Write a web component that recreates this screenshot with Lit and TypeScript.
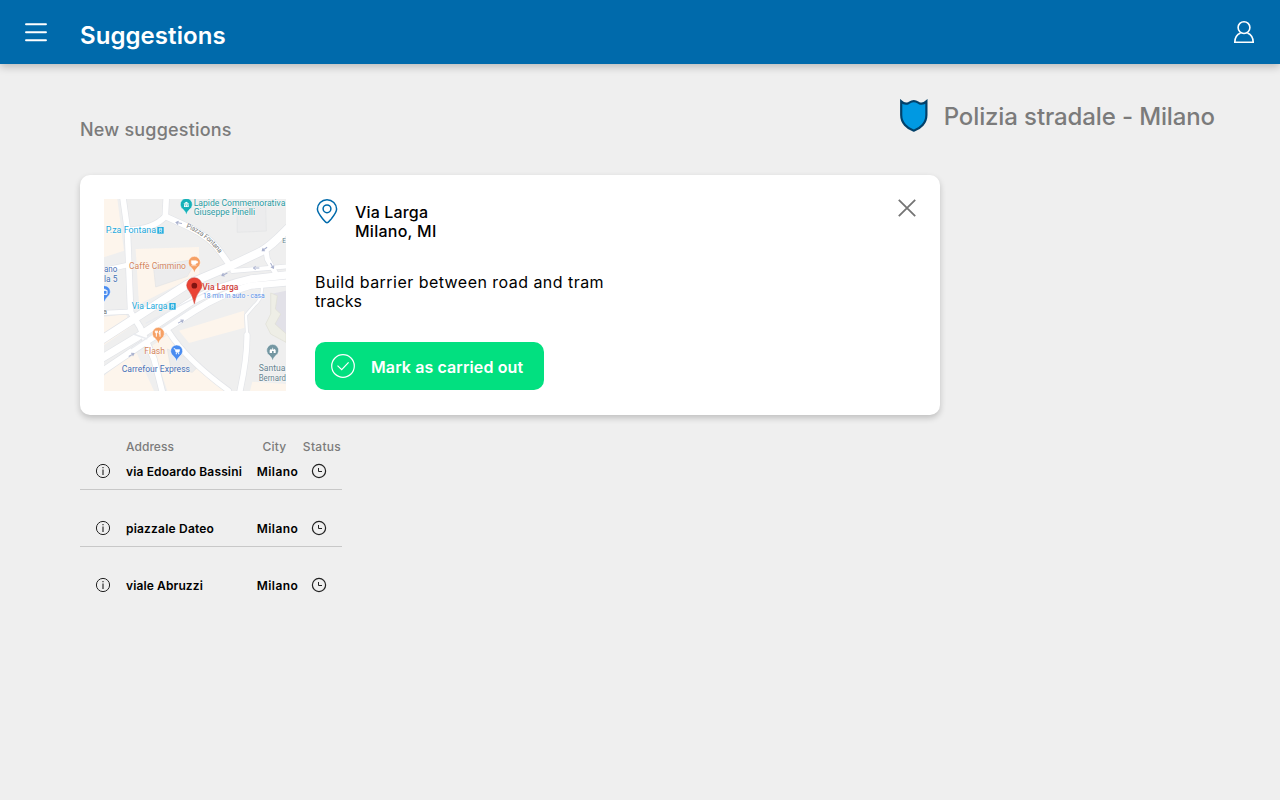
import { LitElement, html, css, svg } from "lit";
import { customElement, property } from "lit/decorators.js";

@customElement("street-map")
class StreetMap extends LitElement {
  static styles = css`
    :host { display: block; width: 182px; height: 192px; }
    svg { display: block; width: 100%; height: 100%; font-family: Roboto, sans-serif; }
    .block { fill: #fdf5ec; }
    .lot { fill: #ececed; stroke: #e3e4e6; stroke-width: 2; }
    .edge { fill: none; stroke: #e2e4e8; stroke-linecap: round; stroke-linejoin: round; }
    .road { fill: none; stroke: #fff; stroke-linecap: round; stroke-linejoin: round; }
    .arrow { fill: none; stroke: #a9b1ce; stroke-width: 3; }
    text { paint-order: stroke; stroke: #fff; stroke-width: 3px; stroke-opacity: 0.6; }
    .teal { fill: #2a9ba3; }
    .cyan { fill: #25a9dc; }
    .orange { fill: #d4855c; }
    .blue { fill: #466fb4; }
    .slate { fill: #66838f; }
    .red { fill: #cf3c38; font-weight: 500; }
    .eta { fill: #5b91e8; }
    .grey { fill: #777; }
  `;

  private roads: [string, number][] = [
    ["M56 -10L70 90L80 340L108 384L150 480L178 590", 17],
    ["M-10 216L75 197", 14],
    ["M-10 342L80 338", 13],
    ["M187 -10L184 52Q150 90 70 94", 17],
    ["M184 52L250 82Q320 115 350 160L382 205", 17],
    ["M556 84C520 120 500 142 470 158L382 200L250 256L-10 424", 24],
    ["M385 216L556 202", 12],
    ["M486 155L490 180L518 228", 15],
    ["M556 227L440 240Q350 260 270 302L100 414L-10 480", 22],
    ["M556 250L440 260Q350 285 270 336L120 432L-10 520", 19],
    ["M474 265Q475 300 450 320L426 348L429 405", 7],
    ["M429 408Q430 480 405 590", 16],
    ["M195 400Q250 485 374 575", 15],
  ];

  private labels: [string, string, number, number, number, number][] = [
    ["teal", "Lapide Commemorativa", 269, 20, 275, 26],
    ["teal", "Giuseppe Pinelli", 269, 49, 184, 26],
    ["cyan", "P.za Fontana", 5, 102, 151, 26],
    ["orange", "Caffè Cimmino", 75, 209, 171, 26],
    ["blue", "ano", 0, 220, 40, 26],
    ["blue", "la 5", 0, 250, 40, 26],
    ["cyan", "Via Larga", 83, 329, 107, 26],
    ["orange", "Flash", 121, 466, 62, 26],
    ["blue", "Carrefour Express", 53, 518, 205, 26],
    ["slate", "Santua", 464, 515, 80, 26],
    ["slate", "Bernard", 464, 545, 82, 26],
    ["red", "Via Larga", 295, 274, 108, 26],
    ["eta", "18 min in auto - casa", 297, 298, 185, 20],
  ];

  render() {
    return html`<svg viewBox="0 0 546 576">
      <rect width="546" height="576" fill="#efefef"></rect>
      <path class="block" d="M0 0H40L60 155L0 175ZM95 150L285 144L286 225L105 316ZM0 354L65 345L85 380L0 438ZM225 395L420 335L422 386L255 432ZM0 530L95 455L150 576H0ZM145 440L195 405L370 576H190ZM445 548L546 555V576H438Z"></path>
      <path class="lot" d="M400 32L485 15L487 96L400 100ZM148 200L280 180L250 232L155 264ZM190 450L290 495L265 520L200 505Z"></path>
      <path fill="#e2e1e8" d="M500 285L546 275V425L505 395Z"></path>
      <path fill="#eeeee6" stroke="#e0dfd5" stroke-width="2" d="M500 282L520 290L514 330L530 345L513 375L546 404V430L500 405L485 375L500 345Z"></path>
      ${this.roads.map(([d, w]) => svg`<path class="edge" d=${d} stroke-width=${w + 4}></path>`)}
      ${this.roads.map(([d, w]) => svg`<path class="road" d=${d} stroke-width=${w}></path>`)}
      <path fill="none" stroke="#e9ebef" stroke-width="4" d="M125 373L330 267M80 450L260 328M130 420L88 405"></path>
      ${[[225, 72, 190], [362, 226, 155], [482, 150, 145], [457, 207, 180], [504, 200, 60], [230, 368, -30], [82, 468, -30]].map(
        ([x, y, a]) => svg`<path class="arrow" transform="translate(${x} ${y}) rotate(${a})" d="M-9 0H8M2 -5L9 0L2 5"></path>`
      )}

      <path id="fontana" fill="none" d="M246 86Q305 108 350 168"></path>
      <text class="grey" font-size="20"><textPath href="#fontana" textLength="128">Piazza Fontana</textPath></text>
      ${this.labels.map(
        ([tone, label, x, y, length, size]) =>
          svg`<text class=${tone} x=${x} y=${y} font-size=${size} textLength=${length} lengthAdjust="spacingAndGlyphs">${label}</text>`
      )}
      <text class="grey" font-size="22" x="-3" y="346">a</text>
      <text class="slate" font-size="24" x="535" y="132" textLength="11" lengthAdjust="spacingAndGlyphs">E</text>

      ${[[160, 84], [196, 312]].map(
        ([x, y]) => svg`<g transform="translate(${x} ${y})"><rect width="19" height="20" fill="#20acdf"></rect><path d="M6 4H13V13H6ZM6 8H13M6 17L8 14M13 17L11 14" fill="none" stroke="#fff" stroke-width="2"></path></g>`
      )}
      ${this.pin(247, 17, "#16b1b8", svg`<path d="M-9 -3L0 -9L9 -3ZM-7 -1H7V7H-7Z" fill="#fff"></path><path d="M-3 0V5M3 0V5" stroke="#16b1b8" stroke-width="2"></path>`)}
      ${this.pin(271, 191, "#f6a064", svg`<path d="M-9 -6H6V1Q6 6 0 6H-3Q-9 6 -9 0ZM6 -4H10V1H6M-9 9H7" fill="#fff" stroke="#fff" stroke-width="1.5"></path>`)}
      ${this.pin(163, 404, "#f6a064", svg`<path d="M-6 -9V9M-9 -9V-3H-3V-9M5 9V-9Q1 -5 3 1H5" fill="none" stroke="#fff" stroke-width="3"></path>`)}
      ${this.pin(218, 457, "#4a8cf0", svg`<path d="M-9 -8H-5L-2 3H7L9 -5H-4" fill="#fff" stroke="#fff" stroke-width="2"></path><circle cx="-1" cy="7" r="2" fill="#fff"></circle><circle cx="6" cy="7" r="2" fill="#fff"></circle>`)}
      ${this.pin(1, 279, "#4a8cf0", svg`<path d="M-8 -5H8V7H-8ZM-4 -8H4" fill="none" stroke="#fff" stroke-width="3"></path>`)}
      ${this.pin(506, 455, "#7497a2", svg`<path d="M-9 7V-1L-5 -6L-2 -2L0 -10L3 -2L6 -6L9 -1V7H3V1H-2V7Z" fill="#fff"></path>`)}
      <path d="M271 314Q266 290 256 277Q248 268 248 259A23 23 0 0 1 294 259Q294 268 286 277Q275 291 271 314Z" fill="#ea4335" stroke="#c9382d" stroke-width="1.5"></path>
      <circle cx="271" cy="260" r="8.5" fill="#811411"></circle>
    </svg>`;
  }

  private pin(x: number, y: number, color: string, glyph: unknown) {
    return svg`<g transform="translate(${x} ${y})"><path fill=${color} stroke="#fff" stroke-width="1.5" d="M0 31Q-2 21 -10 14A18 18 0 1 1 10 14Q2 21 0 31Z"></path>${glyph}</g>`;
  }
}

@customElement("status-table")
class StatusTable extends LitElement {
  @property({ attribute: false }) rows: string[][] = [];

  static styles = css`
    :host { display: block; width: 262px; margin-top: 22px; font-size: 12px; line-height: 20px; font-weight: 500; }
    .line { display: grid; grid-template-columns: 46px 123px 50px 43px; align-items: center; text-align: center; }
    .head { height: 20px; color: #7b7b7b; }
    .head .address { letter-spacing: 0.05px; }
    .city { letter-spacing: 0.25px; padding-left: 1px; }
    .status { letter-spacing: 0.3px; padding-left: 3px; }
    .address { text-align: left; }
    .head, .row { box-sizing: border-box; }
    .row { height: 57px; border-bottom: 1px solid #c8c8c8; color: #000; padding-top: 20px; font-weight: 600; }
    .row.first { height: 33px; padding-top: 0; padding-bottom: 4px; }
    .row.last { border-bottom-color: transparent; }
    .row .city { letter-spacing: 0.4px; padding-left: 7px; }
    .row span { padding-top: 2px; }
    .edoardo { letter-spacing: 0.15px; }
    .dateo { letter-spacing: 0.2px; }
    .abruzzi { letter-spacing: 0.12px; }
    svg { display: block; width: 16px; height: 16px; margin-left: 15px; fill: none; stroke: #222; }
    svg.clock { margin-left: 12px; }
  `;

  render() {
    return html`
      <div class="line head"><span></span><span class="address">Address</span><span class="city">City</span><span class="status">Status</span></div>
      ${this.rows.map(
        ([address, city, kind], i) => html`<div class="line row ${i === 0 ? "first" : ""} ${i === this.rows.length - 1 ? "last" : ""}">
          <svg viewBox="0 0 16 16"><circle cx="8" cy="8" r="6.6"></circle><path d="M8 6.5V12M8 4V5.3" stroke="#555" stroke-width="1.5"></path></svg>
          <span class="address ${kind}">${address}</span>
          <span class="city">${city}</span>
          <svg class="clock" viewBox="0 0 16 16"><circle cx="8" cy="8" r="6.6" stroke-width="1.2"></circle><path d="M7.5 5V8.5H11"></path></svg>
        </div>`
      )}
    `;
  }
}

@customElement("app-root")
class AppRoot extends LitElement {
  static styles = css`
    :host { display: block; min-height: 800px; background: #efefef; font-family: Inter, sans-serif; color: #000; }
    header { height: 64px; box-sizing: border-box; padding: 0 24px; display: flex; align-items: center; background: #006aab; color: #fff; box-shadow: 0 3px 8px rgba(0, 0, 0, 0.22); }
    svg { display: block; fill: none; flex: none; }
    .menu, .user { width: 24px; height: 24px; stroke: #fff; }
    .title { margin: 7px auto 0 32px; font-size: 24px; line-height: 30px; font-weight: 600; letter-spacing: 0.07px; }
    .top { display: flex; justify-content: space-between; padding: 35px 65px 0 80px; height: 76px; color: #7b7b7b; }
    .new { margin: 20px 0 0; font-size: 18px; line-height: 22px; font-weight: 500; letter-spacing: 0.2px; }
    .office { display: flex; gap: 15px; align-items: flex-start; font-size: 24px; line-height: 36px; font-weight: 500; letter-spacing: -0.12px; }
    .shield { width: 30px; height: 34px; }
    main { padding-left: 80px; }
    .card { width: 860px; height: 240px; box-sizing: border-box; padding: 24px; border-radius: 10px; background: #fff; box-shadow: 0 3px 6px rgba(0, 0, 0, 0.2); display: flex; }
    .details { margin-left: 29px; width: 300px; }
    .place { display: flex; gap: 16px; line-height: 19px; font-weight: 500; padding-top: 4px; }
    .marker { width: 24px; height: 26px; margin-top: -5px; stroke: #006aab; stroke-width: 1.5; }
    .street { letter-spacing: 0.16px; }
    .town { letter-spacing: 0.26px; }
    .request { margin: 32px 0 0; line-height: 19px; letter-spacing: 0.46px; }
    .tight { letter-spacing: 0.08px; }
    .done { display: flex; align-items: center; gap: 16px; width: 229px; height: 48px; box-sizing: border-box; margin-top: 31px; padding: 0 16px; border: 0; border-radius: 10px; background: #02e080; color: #fff; font: 600 16px/20px Inter, sans-serif; letter-spacing: 0.1px; white-space: nowrap; }
    .done svg { width: 24px; height: 24px; stroke: #fff; stroke-width: 1.2; }
    .done span { padding-top: 2px; }
    .close { width: 18px; height: 18px; margin: 0 0 0 auto; stroke: #747474; stroke-width: 1.8; }
  `;

  private rows = [
    ["via Edoardo Bassini", "Milano", "edoardo"],
    ["piazzale Dateo", "Milano", "dateo"],
    ["viale Abruzzi", "Milano", "abruzzi"],
  ];

  render() {
    return html`
      <header>
        <svg class="menu" viewBox="0 0 24 24" stroke-width="1.9" stroke-linecap="round"><path d="M2 4.2H22M2 12.2H22M2 20.2H22"></path></svg>
        <div class="title">Suggestions</div>
        <svg class="user" viewBox="0 0 24 24" stroke-width="1.6"><circle cx="12" cy="7.6" r="5.9"></circle><path d="M2.8 22.2Q2.8 15.3 8.6 12.9M15.4 12.9Q21.2 15.3 21.2 22.2M2 22.2H22"></path></svg>
      </header>
      <div class="top">
        <h2 class="new">New suggestions</h2>
        <div class="office">
          <svg class="shield" viewBox="0 0 30 34"><path d="M2.2 2.4C5 5 7.6 5 9.8 3.9C11.6 2.9 12.6 2.2 14.8 2.2C17 2.2 18 2.9 19.8 3.9C22 5 24.6 5 27.4 2.4V16C27.4 24 21.5 29.5 14.8 31.7C8.1 29.5 2.2 24 2.2 16Z" fill="#0099e2" stroke="#02416a" stroke-width="2.2"></path></svg>
          <span>Polizia stradale - Milano</span>
        </div>
      </div>
      <main>
        <section class="card">
          <street-map></street-map>
          <div class="details">
            <div class="place">
              <svg class="marker" viewBox="0 0 24 26"><path d="M12 24.8C10.8 24.8 9.5 23 7.5 20.6C4.8 17.3 2.4 14.4 2.4 11.1A9.6 9.4 0 0 1 21.6 11.1C21.6 14.4 19.2 17.3 16.5 20.6C14.5 23 13.2 24.8 12 24.8Z"></path><circle cx="12" cy="10.8" r="3.9"></circle></svg>
              <div><div class="street">Via Larga</div><div class="town">Milano, MI</div></div>
            </div>
            <p class="request">Build barrier between road and tram <span class="tight">tracks</span></p>
            <button class="done"><svg viewBox="0 0 24 24"><circle cx="12" cy="12" r="11.3"></circle><path d="M6.5 11.6L10.7 15.6L17.6 8.3"></path></svg><span>Mark as carried out</span></button>
          </div>
          <svg class="close" viewBox="0 0 18 18"><path d="M0.8 0.8L17.2 17.2M17.2 0.8L0.8 17.2"></path></svg>
        </section>
        <status-table .rows=${this.rows}></status-table>
      </main>
    `;
  }
}
